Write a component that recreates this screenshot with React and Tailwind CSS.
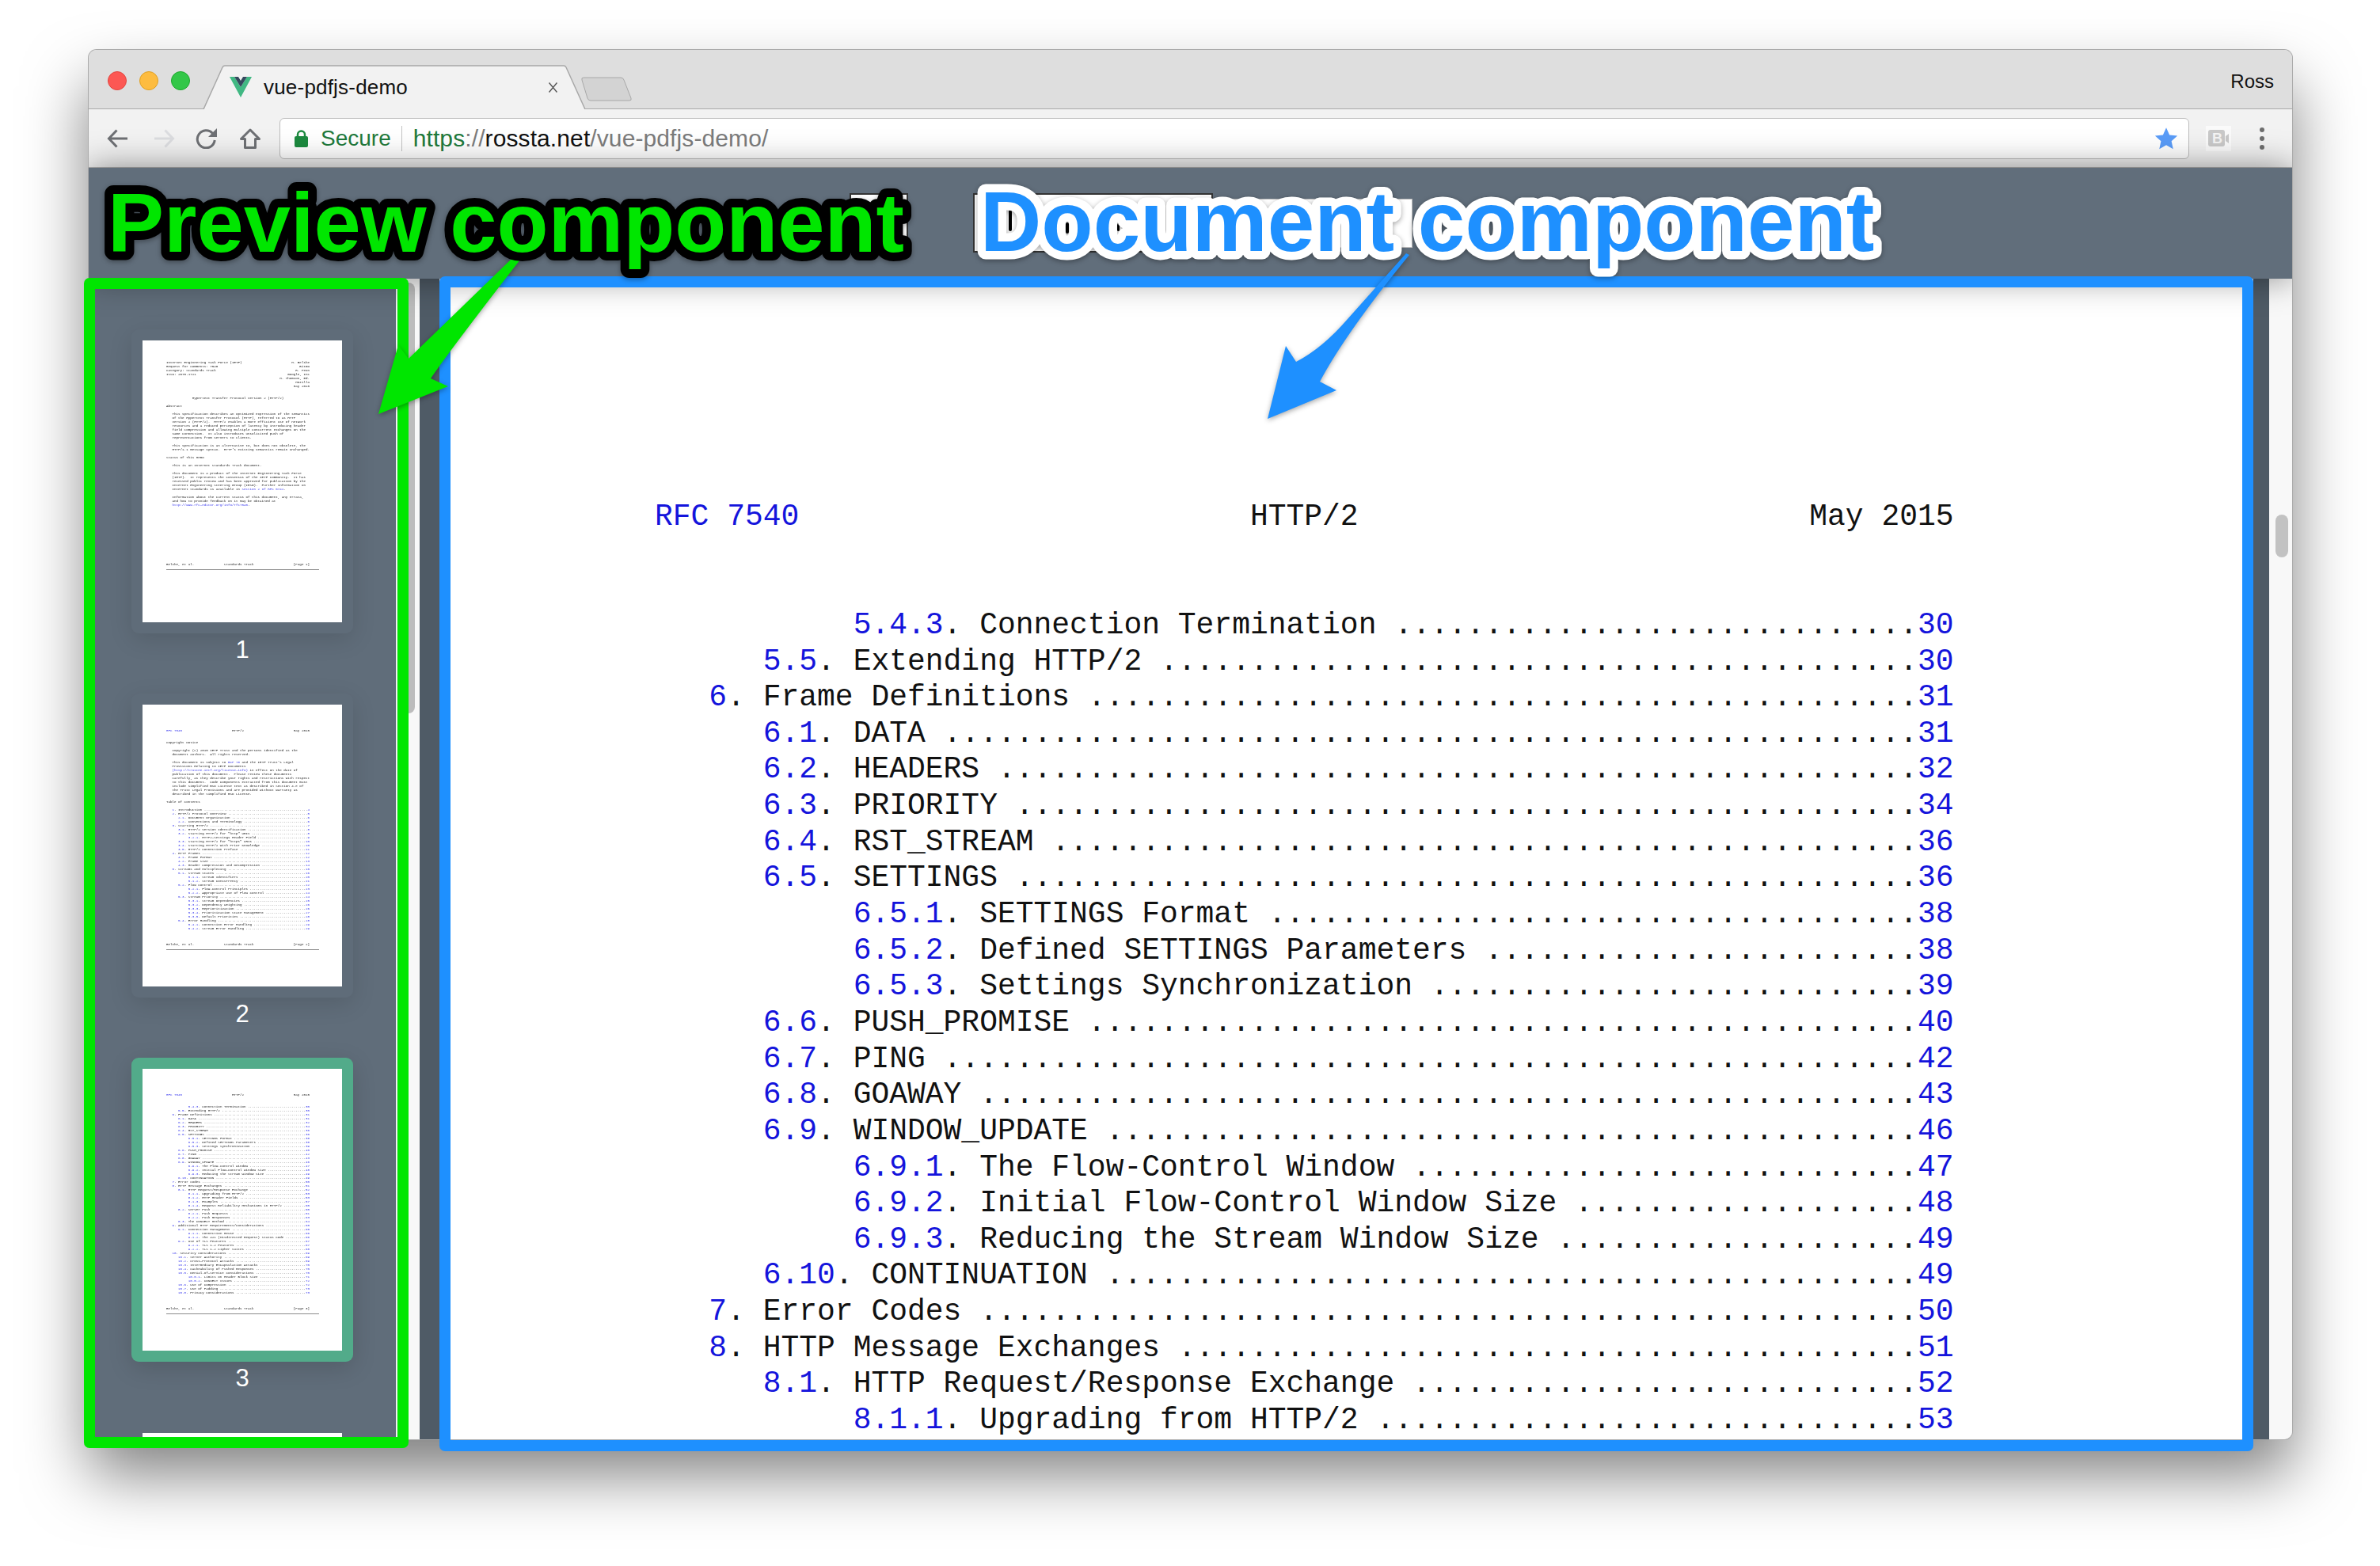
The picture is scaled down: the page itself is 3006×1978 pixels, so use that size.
import React from 'react';

const toc = [
  [11, '5.4.3', 'Connection Termination', '30'],
  [6, '5.5', 'Extending HTTP/2', '30'],
  [3, '6', 'Frame Definitions', '31'],
  [6, '6.1', 'DATA', '31'],
  [6, '6.2', 'HEADERS', '32'],
  [6, '6.3', 'PRIORITY', '34'],
  [6, '6.4', 'RST_STREAM', '36'],
  [6, '6.5', 'SETTINGS', '36'],
  [11, '6.5.1', 'SETTINGS Format', '38'],
  [11, '6.5.2', 'Defined SETTINGS Parameters', '38'],
  [11, '6.5.3', 'Settings Synchronization', '39'],
  [6, '6.6', 'PUSH_PROMISE', '40'],
  [6, '6.7', 'PING', '42'],
  [6, '6.8', 'GOAWAY', '43'],
  [6, '6.9', 'WINDOW_UPDATE', '46'],
  [11, '6.9.1', 'The Flow-Control Window', '47'],
  [11, '6.9.2', 'Initial Flow-Control Window Size', '48'],
  [11, '6.9.3', 'Reducing the Stream Window Size', '49'],
  [6, '6.10', 'CONTINUATION', '49'],
  [3, '7', 'Error Codes', '50'],
  [3, '8', 'HTTP Message Exchanges', '51'],
  [6, '8.1', 'HTTP Request/Response Exchange', '52'],
  [11, '8.1.1', 'Upgrading from HTTP/2', '53'],
  [11, '8.1.2', 'HTTP Header Fields', '53'],
  [11, '8.1.3', 'Examples', '57'],
  [11, '8.1.4', 'Request Reliability Mechanisms in HTTP/2', '60'],
  [6, '8.2', 'Server Push', '60'],
  [11, '8.2.1', 'Push Requests', '61'],
  [11, '8.2.2', 'Push Responses', '63'],
  [6, '8.3', 'The CONNECT Method', '64'],
  [3, '9', 'Additional HTTP Requirements/Considerations', '65'],
  [6, '9.1', 'Connection Management', '65'],
  [11, '9.1.1', 'Connection Reuse', '66'],
  [11, '9.1.2', 'The 421 (Misdirected Request) Status Code', '66'],
  [6, '9.2', 'Use of TLS Features', '67'],
  [11, '9.2.1', 'TLS 1.2 Features', '67'],
  [11, '9.2.2', 'TLS 1.2 Cipher Suites', '68'],
  [3, '10', 'Security Considerations', '69'],
  [6, '10.1', 'Server Authority', '69'],
  [6, '10.2', 'Cross-Protocol Attacks', '69'],
  [6, '10.3', 'Intermediary Encapsulation Attacks', '70'],
  [6, '10.4', 'Cacheability of Pushed Responses', '70'],
  [6, '10.5', 'Denial-of-Service Considerations', '70'],
  [11, '10.5.1', 'Limits on Header Block Size', '71'],
  [11, '10.5.2', 'CONNECT Issues', '72'],
  [6, '10.6', 'Use of Compression', '72'],
  [6, '10.7', 'Use of Padding', '73'],
  [6, '10.8', 'Privacy Considerations', '73'],
];

const tocStart = [
  [3, '1', 'Introduction', '4'],
  [3, '2', 'HTTP/2 Protocol Overview', '5'],
  [6, '2.1', 'Document Organization', '6'],
  [6, '2.2', 'Conventions and Terminology', '6'],
  [3, '3', 'Starting HTTP/2', '7'],
  [6, '3.1', 'HTTP/2 Version Identification', '8'],
  [6, '3.2', 'Starting HTTP/2 for "http" URIs', '8'],
  [11, '3.2.1', 'HTTP2-Settings Header Field', '9'],
  [6, '3.3', 'Starting HTTP/2 for "https" URIs', '10'],
  [6, '3.4', 'Starting HTTP/2 with Prior Knowledge', '10'],
  [6, '3.5', 'HTTP/2 Connection Preface', '11'],
  [3, '4', 'HTTP Frames', '12'],
  [6, '4.1', 'Frame Format', '12'],
  [6, '4.2', 'Frame Size', '13'],
  [6, '4.3', 'Header Compression and Decompression', '14'],
  [3, '5', 'Streams and Multiplexing', '15'],
  [6, '5.1', 'Stream States', '16'],
  [11, '5.1.1', 'Stream Identifiers', '20'],
  [11, '5.1.2', 'Stream Concurrency', '21'],
  [6, '5.2', 'Flow Control', '22'],
  [11, '5.2.1', 'Flow-Control Principles', '23'],
  [11, '5.2.2', 'Appropriate Use of Flow Control', '24'],
  [6, '5.3', 'Stream Priority', '24'],
  [11, '5.3.1', 'Stream Dependencies', '25'],
  [11, '5.3.2', 'Dependency Weighting', '26'],
  [11, '5.3.3', 'Reprioritization', '26'],
  [11, '5.3.4', 'Prioritization State Management', '27'],
  [11, '5.3.5', 'Default Priorities', '28'],
  [6, '5.4', 'Error Handling', '28'],
  [11, '5.4.1', 'Connection Error Handling', '29'],
  [11, '5.4.2', 'Stream Error Handling', '29'],
];

// builds one 72 column table of contents line, {..} marks the blue links
function tocLine([indent, num, title, page]) {
  const left = ' '.repeat(indent) + num + '. ' + title + ' ';
  const dots = '.'.repeat(72 - left.length - page.length);
  return ' '.repeat(indent) + '{' + num + '}. ' + title + ' ' + dots + '{' + page + '}';
}

function leftRight(a, b) {
  return a + ' '.repeat(72 - a.length - b.length) + b;
}

const runningHead = '{RFC 7540}' + ' '.repeat(25) + 'HTTP/2' + ' '.repeat(25) + 'May 2015';
const footer = (n) => 'Belshe, et al.' + ' '.repeat(15) + 'Standards Track' + ' '.repeat(20) + '[Page ' + n + ']';

const page1 = [
  leftRight('Internet Engineering Task Force (IETF)', 'M. Belshe'),
  leftRight('Request for Comments: 7540', 'BitGo'),
  leftRight('Category: Standards Track', 'R. Peon'),
  leftRight('ISSN: 2070-1721', 'Google, Inc'),
  leftRight('', 'M. Thomson, Ed.'),
  leftRight('', 'Mozilla'),
  leftRight('', 'May 2015'),
  '',
  '',
  '             Hypertext Transfer Protocol Version 2 (HTTP/2)',
  '',
  'Abstract',
  '',
  '   This specification describes an optimized expression of the semantics',
  '   of the Hypertext Transfer Protocol (HTTP), referred to as HTTP',
  '   version 2 (HTTP/2).  HTTP/2 enables a more efficient use of network',
  '   resources and a reduced perception of latency by introducing header',
  '   field compression and allowing multiple concurrent exchanges on the',
  '   same connection.  It also introduces unsolicited push of',
  '   representations from servers to clients.',
  '',
  '   This specification is an alternative to, but does not obsolete, the',
  "   HTTP/1.1 message syntax.  HTTP's existing semantics remain unchanged.",
  '',
  'Status of This Memo',
  '',
  '   This is an Internet Standards Track document.',
  '',
  '   This document is a product of the Internet Engineering Task Force',
  '   (IETF).  It represents the consensus of the IETF community.  It has',
  '   received public review and has been approved for publication by the',
  '   Internet Engineering Steering Group (IESG).  Further information on',
  '   Internet Standards is available in {Section 2 of RFC 5741}.',
  '',
  '   Information about the current status of this document, any errata,',
  '   and how to provide feedback on it may be obtained at',
  '   {http://www.rfc-editor.org/info/rfc7540}.',
  ...Array(14).fill(''),
  footer(1),
];

const page2 = [
  runningHead,
  '',
  '',
  'Copyright Notice',
  '',
  '   Copyright (c) 2015 IETF Trust and the persons identified as the',
  '   document authors.  All rights reserved.',
  '',
  "   This document is subject to {BCP 78} and the IETF Trust's Legal",
  '   Provisions Relating to IETF Documents',
  '   {(http://trustee.ietf.org/license-info)} in effect on the date of',
  '   publication of this document.  Please review these documents',
  '   carefully, as they describe your rights and restrictions with respect',
  '   to this document.  Code Components extracted from this document must',
  '   include Simplified BSD License text as described in Section 4.e of',
  '   the Trust Legal Provisions and are provided without warranty as',
  '   described in the Simplified BSD License.',
  '',
  'Table of Contents',
  '',
  ...tocStart.map(tocLine),
  '',
  '',
  '',
  footer(2),
];

const page3 = [runningHead, '', '', ...toc.map(tocLine), '', '', '', footer(3)];

function Line({ text, linkClass }) {
  const parts = text.split(/(\{[^}]*\})/);
  return (
    <div className="whitespace-pre">
      {parts.map((p, i) =>
        p.startsWith('{') ? (
          <span key={i} className={linkClass}>
            {p.slice(1, -1)}
          </span>
        ) : (
          <span key={i}>{p}</span>
        )
      )}
      {text === '' ? ' ' : null}
    </div>
  );
}

function Thumb({ n, lines, top, active }) {
  return (
    <div className="flex h-[460px] flex-col items-center">
      <div
        className={
          active
            ? 'rounded-[9px] bg-[#52ab8a] p-[14px] shadow-[0_8px_30px_rgba(0,0,0,0.15)]'
            : 'rounded-[9px] bg-[#5f6c79] p-[14px] shadow-[0_8px_30px_rgba(0,0,0,0.12)]'
        }
      >
        <div
          className={
            top === 25
              ? "h-[356px] w-[252px] overflow-hidden bg-white pl-[30px] pt-[25.5px] text-[4.19px] leading-[5.02px] text-[#222] blur-[0.3px] [font-family:'Liberation_Mono',monospace]"
              : "h-[356px] w-[252px] overflow-hidden bg-white pl-[30px] pt-[30.5px] text-[4.19px] leading-[5.02px] text-[#222] blur-[0.3px] [font-family:'Liberation_Mono',monospace]"
          }
        >
          {lines.map((l, i) => (
            <Line key={i} text={l} linkClass="text-[#3a3aee]" />
          ))}
          <div className="mt-[3px] h-px w-[193px] bg-[#8c8c8c]" />
        </div>
      </div>
      <div className="mt-[3px] text-[31px] leading-[36px] text-white">{n}</div>
    </div>
  );
}

function Toolbar() {
  return (
    <div className="flex h-[74px] shrink-0 items-center border-b border-[#b4b4b4] bg-[#f2f2f2] pl-[23px]">
      <svg className="h-[24px] w-[26px]" viewBox="0 0 26 24" fill="none" stroke="#6e7074" strokeWidth="3">
        <path d="M26 12H3M12.500 1.500L2.500 12l10 10.500" />
      </svg>
      <svg className="ml-[34px] h-[24px] w-[26px]" viewBox="0 0 26 24" fill="none" stroke="#dcdde0" strokeWidth="3">
        <path d="M0 12h23M13.500 1.500L23.500 12l-10 10.500" />
      </svg>
      <svg className="ml-[26px] h-[26px] w-[27px]" viewBox="0 0 27 26" fill="none">
        <path d="M21.500 6.500A11 11 0 1 0 24.200 15" stroke="#6e7074" strokeWidth="3" />
        <path d="M27 0v11H16z" fill="#6e7074" />
      </svg>
      <svg className="ml-[29px] h-[26px] w-[26px]" viewBox="0 0 26 26" fill="none" stroke="#6e7074" strokeWidth="3" strokeLinejoin="round">
        <path d="M13 2L1.500 13.500H6.500V24.500H19.500V13.500H24.500z" />
      </svg>
      <div className="ml-[24px] flex h-[52px] w-[2412px] items-center rounded-[6px] border border-[#bdbdbd] bg-white pl-[18px]">
        <svg className="h-[22px] w-[17px]" viewBox="0 0 17 22" fill="#1c8a3f">
          <path d="M4 9V6a4.500 4.500 0 0 1 9 0v3" fill="none" stroke="#1c8a3f" strokeWidth="2.500" />
          <rect x="0" y="8" width="17" height="14" rx="2" />
        </svg>
        <span className="ml-[16px] text-[28px] text-[#1f7a3c]">Secure</span>
        <div className="ml-[13px] h-[32px] w-px bg-[#c4c4c4]" />
        <div className="ml-[14px] text-[30px] leading-none tracking-[0.1px]">
          <span className="text-[#1f7a3c]">https</span>
          <span className="text-[#7c7c7c]">://</span>
          <span className="text-[#111]">rossta.net</span>
          <span className="text-[#7c7c7c]">/vue-pdfjs-demo/</span>
        </div>
        <svg className="ml-auto mr-[13px] h-[30px] w-[30px]" viewBox="0 0 24 24" fill="#5a9cf8">
          <path d="M12 1l3.300 7.400 8 .8-6 5.400 1.700 7.900L12 18.500 5 22.500l1.700-7.900-6-5.400 8-.8z" />
        </svg>
      </div>
      <svg className="ml-[21px] h-[32px] w-[32px] bg-[#fafafa]" viewBox="0 0 32 32">
        <rect x="3" y="5" width="21" height="21" rx="3" fill="#c9c9c9" />
        <path d="M25 13l4-3v12l-4-3z" fill="#c9c9c9" />
        <text x="8" y="22" fontSize="18" fontWeight="700" fill="#f4f4f4" fontFamily="Liberation Sans">B</text>
      </svg>
      <div className="ml-[36px] flex flex-col gap-[5px]">
        <div className="h-[6px] w-[6px] rounded-full bg-[#6e6e6e]" />
        <div className="h-[6px] w-[6px] rounded-full bg-[#6e6e6e]" />
        <div className="h-[6px] w-[6px] rounded-full bg-[#6e6e6e]" />
      </div>
    </div>
  );
}

function TitleBar() {
  return (
    <div className="flex h-[75px] shrink-0 items-end border-b border-[#a8a8a8] bg-[#dedede] pl-[24px]">
      <div className="mb-[23px] flex gap-[16px]">
        <div className="h-[24px] w-[24px] rounded-full border border-[#e2463f] bg-[#fc5753]" />
        <div className="h-[24px] w-[24px] rounded-full border border-[#dfa023] bg-[#fdbc40]" />
        <div className="h-[24px] w-[24px] rounded-full border border-[#1ea82d] bg-[#33c748]" />
      </div>
      <div className="relative z-10 mb-[-1px] ml-[16px] flex h-[56px] w-[484px] items-center">
        <svg className="absolute inset-0 h-[56px] w-[484px]" viewBox="0 0 484 56">
          <path d="M0 56H1L25 3Q26 1 28 1H456Q458 1 459 3L483 56H484" fill="#f2f2f2" stroke="#a8a8a8" strokeWidth="1.500" />
        </svg>
        <svg className="relative ml-[34px] h-[26px] w-[28px]" viewBox="0 0 28 26">
          <path d="M22 0L14 13 6 0H0l14 26L28 0z" fill="#41b883" />
          <path d="M22 0L14 13 6 0h5l3 5 3-5z" fill="#35495e" />
        </svg>
        <span className="relative ml-[15px] text-[26px] leading-none text-[#111] tracking-[0.2px]">vue-pdfjs-demo</span>
        <svg className="relative ml-auto mr-[36px] h-[13px] w-[11px]" viewBox="0 0 11 13" stroke="#555" strokeWidth="1.500">
          <path d="M.5.500l10 12M10.500.500l-10 12" />
        </svg>
      </div>
      <svg className="mb-[9px] ml-[-6px] h-[31px] w-[65px]" viewBox="0 0 65 31">
        <path d="M3 1H50Q53 1 54 4L63 27Q64 30 61 30H12Q9 30 8 27L1 4Q0 1 3 1Z" fill="#d3d3d3" stroke="#a8a8a8" />
      </svg>
      <span className="mb-[20px] ml-auto mr-[23px] text-[24px] leading-[28px] text-[#111]">Ross</span>
    </div>
  );
}

function Annotations() {
  return (
    <div className="absolute inset-0 z-20">
      <div className="absolute left-[1073px] top-[244px] h-[75px] w-[74px] border-2 border-[#333] bg-white" />
      <div className="absolute left-[1229px] top-[244px] h-[75px] w-[303px] border-2 border-[#333] bg-white" />
      <div className="absolute left-[1532px] top-[251px] h-[62px] w-[252px] border border-[#bbb] bg-white" />
      <div className="absolute left-[1274px] top-[265px] h-[27px] w-[4px] rounded-full bg-black" />
      <div className="absolute left-[1346px] top-[281px] h-[14px] w-[4px] rounded-full bg-black" />
      <div className="absolute left-[1411px] top-[282px] h-[10px] w-[3px] rounded-full bg-black" />

      <div className="absolute left-[106px] top-[351px] h-[1478px] w-[410px] rounded-[7px] border-[14px] border-[#00e600]" />
      <div className="absolute left-[555px] top-[349px] h-[1484px] w-[2291px] rounded-[7px] border-[14px] border-[#1e90ff]" />

      <svg className="absolute inset-0 h-[1978px] w-[3006px]" viewBox="0 0 3006 1978">
        <g className="drop-shadow-[0_2px_3px_rgba(0,0,0,0.35)]">
          <path d="M657 328H645L516 453L503 436L478 523L566 488L544 478Q570 440 657 328Z" fill="#00e600" />
          <path d="M1780 322L1776 320L1702 403Q1670 440 1637 457L1624 437L1601 529L1688 493L1667 482Q1700 420 1780 322Z" fill="#1e90ff" />
          <text x="136" y="318" fontSize="106.5" fontWeight="700" fill="#00e600" stroke="#000" strokeWidth="22" strokeLinejoin="round" paintOrder="stroke">
            Preview component
          </text>
          <text x="1238" y="317" fontSize="107" fontWeight="700" fill="#1e90ff" stroke="#fff" strokeWidth="21" strokeLinejoin="round" paintOrder="stroke">
            Document component
          </text>
        </g>
      </svg>
    </div>
  );
}

export default function App() {
  const shown = toc.slice(0, 23);
  return (
    <div className="relative isolate h-[1978px] w-[3006px] overflow-hidden bg-white pl-[112px] pt-[63px] [font-family:'Liberation_Sans',Arial,sans-serif]">
      <div className="isolate flex h-[1755px] w-[2783px] flex-col overflow-hidden rounded-[10px] shadow-[0_0_0_1px_#aaa,0_44px_80px_rgba(0,0,0,0.5)]">
        <TitleBar />
        <Toolbar />
        <div className="relative z-10 h-[140px] shrink-0 bg-[#616e7b] shadow-[0_0_40px_rgba(0,0,0,0.45)]" />
        <div className="flex min-h-0 flex-1">
          <div className="h-full w-[390px] shrink-0 overflow-hidden border-r-2 border-[#f0f0f0] bg-[#606d7a] pt-[64px]">
            <Thumb n={1} lines={page1} top={25} />
            <Thumb n={2} lines={page2} top={30} />
            <Thumb n={3} lines={page3} top={30} active />
            <div className="mx-auto mt-[14px] h-[10px] w-[252px] bg-white" />
          </div>
          <div className="w-[28px] shrink-0 bg-[#f8f8f8] pl-[6px] pt-[5px]">
            <div className="h-[544px] w-[16px] rounded-full bg-[#bcbcbc]" />
          </div>
          <div className="flex-1 bg-[#4f5b66] pl-[25px]">
            <div className="h-full w-[2291px] overflow-hidden bg-white pl-[272px] pt-[278px] text-[37.98px] leading-[45.64px] text-[#111] [font-family:'Liberation_Mono',monospace]">
              <Line text={runningHead} linkClass="text-[#1414dc]" />
              <Line text="" linkClass="" />
              <Line text="" linkClass="" />
              {shown.map((r) => (
                <Line key={r[1]} text={tocLine(r)} linkClass="text-[#1414dc]" />
              ))}
            </div>
          </div>
          <div className="w-[29px] shrink-0 bg-[#f8f8f8] pl-[8px] pt-[298px]">
            <div className="h-[54px] w-[16px] rounded-full bg-[#c2c2c2]" />
          </div>
        </div>
      </div>
      <Annotations />
    </div>
  );
}
